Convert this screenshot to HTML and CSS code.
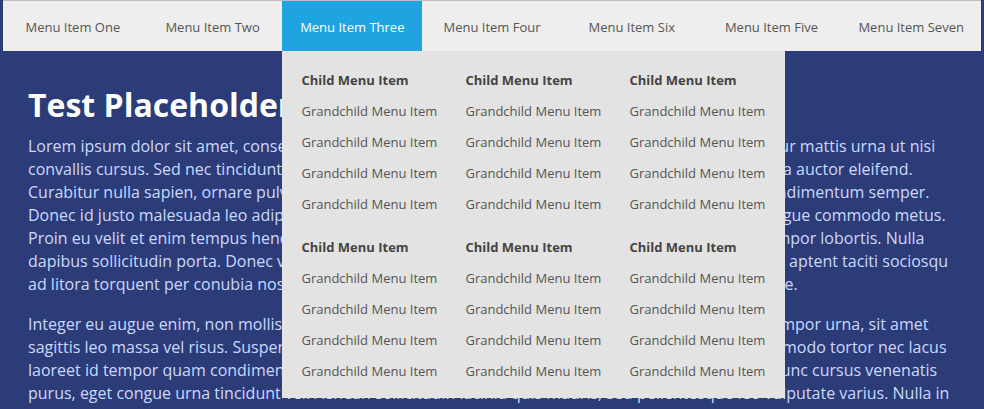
FILE: index.html
```html
<!DOCTYPE html>
<html lang="en">
<head>
<meta charset="utf-8">
<title>Mega Menu</title>
<link rel="stylesheet" href="styles.css">
</head>
<body>
<nav class="nav">
  <ul class="nav-list">
    <li class="nav-item"><a href="#">Menu Item One</a></li>
    <li class="nav-item"><a href="#">Menu Item Two</a></li>
    <li class="nav-item is-active"><a href="#">Menu Item Three</a>
      <div class="mega">
        <div class="mega-group">
          <ul class="mega-col">
            <li class="mega-head">Child Menu Item</li>
            <li>Grandchild Menu Item</li>
            <li>Grandchild Menu Item</li>
            <li>Grandchild Menu Item</li>
            <li>Grandchild Menu Item</li>
          </ul>
          <ul class="mega-col">
            <li class="mega-head">Child Menu Item</li>
            <li>Grandchild Menu Item</li>
            <li>Grandchild Menu Item</li>
            <li>Grandchild Menu Item</li>
            <li>Grandchild Menu Item</li>
          </ul>
          <ul class="mega-col">
            <li class="mega-head">Child Menu Item</li>
            <li>Grandchild Menu Item</li>
            <li>Grandchild Menu Item</li>
            <li>Grandchild Menu Item</li>
            <li>Grandchild Menu Item</li>
          </ul>
        </div>
        <div class="mega-group">
          <ul class="mega-col">
            <li class="mega-head">Child Menu Item</li>
            <li>Grandchild Menu Item</li>
            <li>Grandchild Menu Item</li>
            <li>Grandchild Menu Item</li>
            <li>Grandchild Menu Item</li>
          </ul>
          <ul class="mega-col">
            <li class="mega-head">Child Menu Item</li>
            <li>Grandchild Menu Item</li>
            <li>Grandchild Menu Item</li>
            <li>Grandchild Menu Item</li>
            <li>Grandchild Menu Item</li>
          </ul>
          <ul class="mega-col">
            <li class="mega-head">Child Menu Item</li>
            <li>Grandchild Menu Item</li>
            <li>Grandchild Menu Item</li>
            <li>Grandchild Menu Item</li>
            <li>Grandchild Menu Item</li>
          </ul>
        </div>
      </div>
    </li>
    <li class="nav-item"><a href="#">Menu Item Four</a></li>
    <li class="nav-item"><a href="#">Menu Item Six</a></li>
    <li class="nav-item"><a href="#">Menu Item Five</a></li>
    <li class="nav-item"><a href="#">Menu Item Seven</a></li>
  </ul>
</nav>
<main class="content">
  <h1 class="title">Test Placeholder Content</h1>
  <p>Lorem ipsum dolor sit amet, consectetur adipiscing elit. Pellentesque lacus nec massa augue. Curabitur mattis urna ut nisi convallis cursus. Sed nec tincidunt nunc. Mauris imperdiet lectus sem pretium, facilisis diam felis. Nulla auctor eleifend. Curabitur nulla sapien, ornare pulvinar faucibus sed, euismod sit amet nunc. Etiam magna at nibh condimentum semper. Donec id justo malesuada leo adipiscing iaculis. Praesent massa non ligula sodales, eu varius velit congue commodo metus. Proin eu velit et enim tempus hendrerit. Vivamus eget ultrices leo, amet pharetra nibh. Aliquam at tempor lobortis. Nulla dapibus sollicitudin porta. Donec vel tortor sit amet ante varius tincidunt nec sit amet lacus felis. Class aptent taciti sociosqu ad litora torquent per conubia nostra, per inceptos himenaeos. Fusce vel pellentesque sapien, tristique.</p>
  <p>Integer eu augue enim, non mollis tellus. Libero pretium, euismod nisl eget, lobortis enim. Donec a tempor urna, sit amet sagittis leo massa vel risus. Suspendisse potenti. Quisque posuere ligula vel ex aliquet, et facilisis commodo tortor nec lacus laoreet id tempor quam condimentum. Vestibulum ante ipsum primis faucibus ac luctus et ultrices. Nunc cursus venenatis purus, eget congue urna tincidunt vel. Aenean sollicitudin lacinia quis mauris, sed pellentesque leo vulputate varius. Nulla in hendrerit elit, id placerat ligula. Morbi blandit dui at lectus dapibus, nec tempus libero tincidunt.</p>
</main>
</body>
</html>
```

FILE: styles.css
```css
* {
  box-sizing: border-box;
}

body {
  margin: 0;
  background: #2b3c78;
  font-family: "Open Sans", "Noto Sans", sans-serif;
}

a {
  text-decoration: none;
  color: inherit;
}

ul {
  list-style: none;
  margin: 0;
  padding: 0;
}

.nav {
  margin: 0 3px;
  background: #eeeeee;
  border-top: 1px solid #bdbdbd;
  position: relative;
  z-index: 2;
}

.nav-list {
  display: flex;
  height: 50px;
}

.nav-item {
  flex: 1 1 0;
  position: relative;
  display: flex;
}

.nav-item > a {
  flex: 1;
  display: flex;
  align-items: center;
  justify-content: center;
  font-size: 13px;
  color: #555555;
  padding-top: 1px;
  white-space: nowrap;
}

.nav-item.is-active > a {
  background: #1ea4e1;
  color: #ffffff;
}

.mega {
  position: absolute;
  top: 50px;
  left: 0;
  width: 503px;
  background: #e3e3e3;
  padding: 14px 0 11px 19px;
  display: flex;
  flex-direction: column;
  gap: 12px;
}

.mega-group {
  display: grid;
  grid-template-columns: 164px 164px 1fr;
}

.mega-col li {
  font-size: 13px;
  line-height: 31px;
  color: #555555;
  white-space: nowrap;
}

.mega-col .mega-head {
  font-weight: 700;
  color: #444444;
}

.content {
  padding: 0 24px 0 28px;
  color: #cdd8ff;
}

.title {
  margin: 34px 0 10px;
  font-size: 32px;
  line-height: 40px;
  font-weight: 700;
  color: #ffffff;
}

.content p {
  font-size: 16px;
  line-height: 23px;
  margin: 0 0 17px;
}
```
